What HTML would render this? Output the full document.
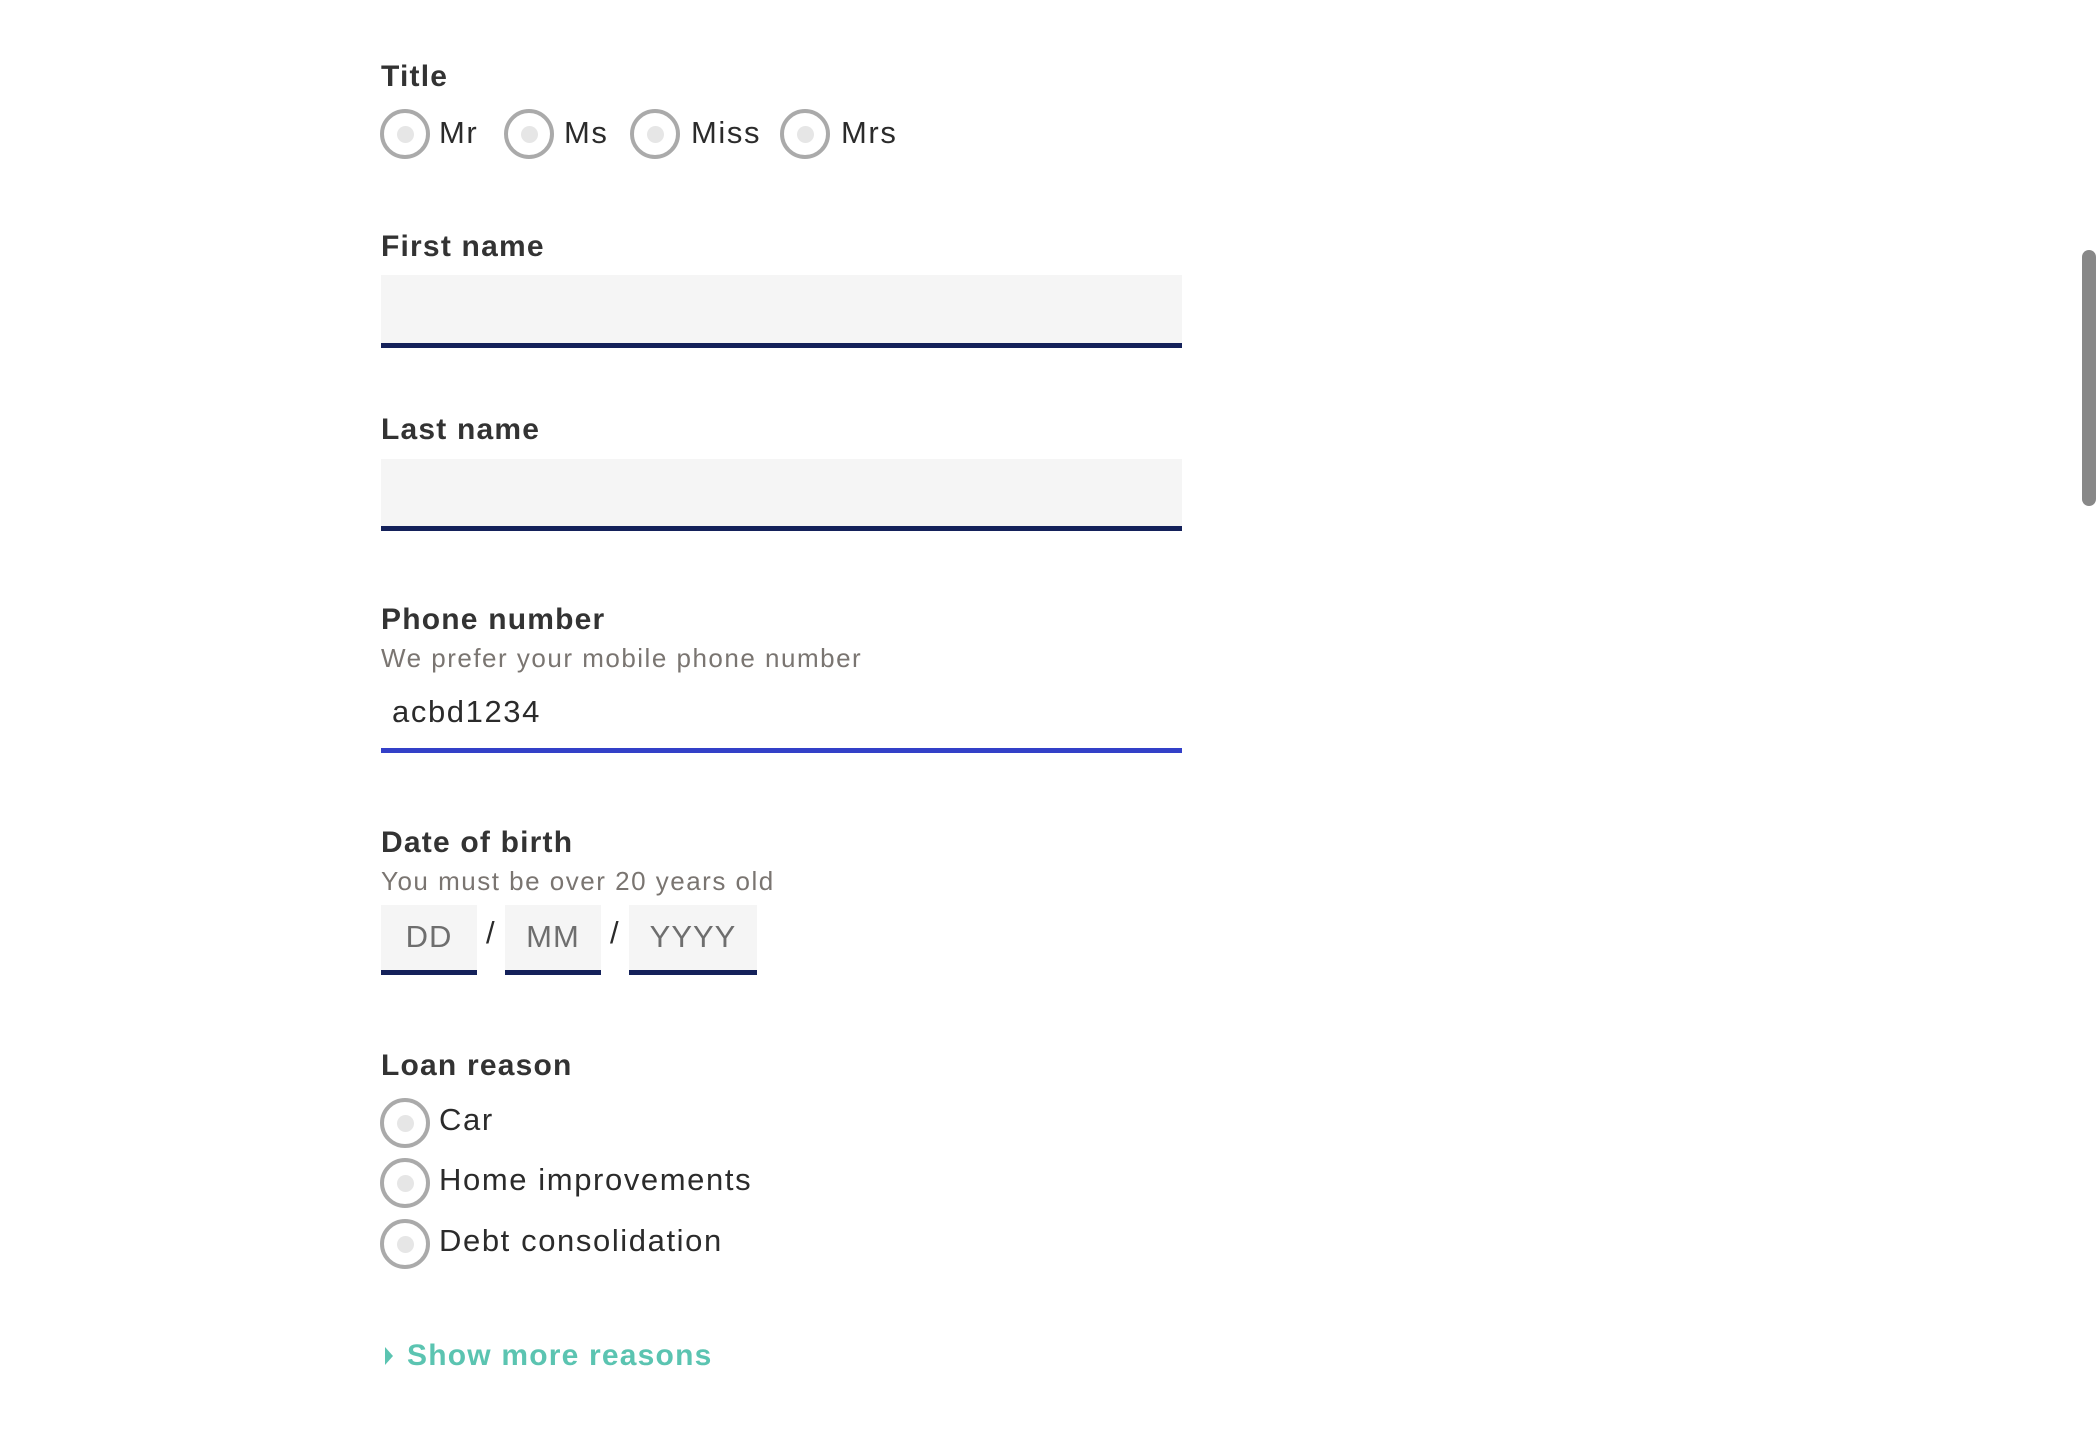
<!DOCTYPE html>
<html><head><meta charset="utf-8"><style>
html,body{margin:0;padding:0;background:#fff;width:2100px;height:1430px;overflow:hidden;font-family:"Liberation Sans",sans-serif;color:#2b2b2b}
.a{position:absolute;white-space:nowrap}
.lbl{font-weight:bold;font-size:30px;color:#333;line-height:1;letter-spacing:1.2px}
.txt{font-size:31px;line-height:1;color:#2b2b2b;letter-spacing:1.6px}
.help{font-size:26px;color:#7a7571;line-height:1;letter-spacing:1.5px}
.r{position:absolute;width:42px;height:42px;border:4px solid #aaa;border-radius:50%;box-sizing:content-box}
.r:after{content:"";position:absolute;left:13px;top:13px;width:17px;height:17px;border-radius:50%;background:#e6e6e6}
.in{position:absolute;background:#f5f5f5;border-bottom:5px solid #14215a;box-sizing:border-box}
.ph{font-size:31px;color:#6e6e6e;line-height:1;letter-spacing:1px}
</style></head><body>
<div class="a lbl" style="left:381px;top:62px">Title</div>
<div class="r" style="left:380px;top:109px"></div><div class="a txt" style="left:439px;top:117px">Mr</div>
<div class="r" style="left:504px;top:109px"></div><div class="a txt" style="left:564px;top:117px">Ms</div>
<div class="r" style="left:630px;top:109px"></div><div class="a txt" style="left:691px;top:117px">Miss</div>
<div class="r" style="left:780px;top:109px"></div><div class="a txt" style="left:841px;top:117px">Mrs</div>

<div class="a lbl" style="left:381px;top:232px">First name</div>
<div class="in" style="left:381px;top:275px;width:801px;height:73px"></div>

<div class="a lbl" style="left:381px;top:415px">Last name</div>
<div class="in" style="left:381px;top:459px;width:801px;height:72px"></div>

<div class="a lbl" style="left:381px;top:605px">Phone number</div>
<div class="a help" style="left:381px;top:645px">We prefer your mobile phone number</div>
<div class="a txt" style="left:392px;top:696px">acbd1234</div>
<div class="a" style="left:381px;top:748px;width:801px;height:5px;background:#3340c8"></div>

<div class="a lbl" style="left:381px;top:828px">Date of birth</div>
<div class="a help" style="left:381px;top:868px">You must be over 20 years old</div>
<div class="in" style="left:381px;top:905px;width:96px;height:70px"></div>
<div class="a ph" style="left:381px;top:921px;width:96px;text-align:center">DD</div>
<div class="a txt" style="left:486px;top:917px">/</div>
<div class="in" style="left:505px;top:905px;width:96px;height:70px"></div>
<div class="a ph" style="left:505px;top:921px;width:96px;text-align:center">MM</div>
<div class="a txt" style="left:610px;top:917px">/</div>
<div class="in" style="left:629px;top:905px;width:128px;height:70px"></div>
<div class="a ph" style="left:629px;top:921px;width:128px;text-align:center">YYYY</div>

<div class="a lbl" style="left:381px;top:1051px">Loan reason</div>
<div class="r" style="left:380px;top:1098px"></div><div class="a txt" style="left:439px;top:1104px">Car</div>
<div class="r" style="left:380px;top:1158px"></div><div class="a txt" style="left:439px;top:1164px">Home improvements</div>
<div class="r" style="left:380px;top:1219px"></div><div class="a txt" style="left:439px;top:1225px">Debt consolidation</div>

<div class="a" style="left:385px;top:1347px;width:0;height:0;border-left:8px solid #5bc4b1;border-top:9px solid transparent;border-bottom:9px solid transparent"></div>
<div class="a lbl" style="left:407px;top:1341px;color:#5bc4b1">Show more reasons</div>

<div class="a" style="left:2082px;top:250px;width:14px;height:256px;background:#888;border-radius:7px"></div>
</body></html>
